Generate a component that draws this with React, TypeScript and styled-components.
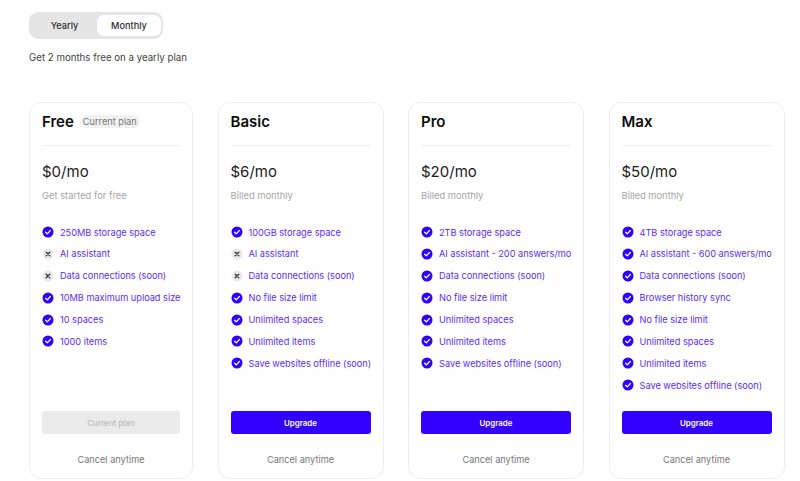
import * as React from "react";
import styled, { createGlobalStyle } from "styled-components";

interface Feature {
    label: string;
    off?: boolean;
}

interface Plan {
    name: string;
    price: string;
    note: string;
    width: number;
    current?: boolean;
    features: Feature[];
}

const plans: Plan[] = [
    {
        name: "Free",
        price: "$0/mo",
        note: "Get started for free",
        width: 164,
        current: true,
        features: [
            { label: "250MB storage space" },
            { label: "AI assistant", off: true },
            { label: "Data connections (soon)", off: true },
            { label: "10MB maximum upload size" },
            { label: "10 spaces" },
            { label: "1000 items" },
        ],
    },
    {
        name: "Basic",
        price: "$6/mo",
        note: "Billed monthly",
        width: 166,
        features: [
            { label: "100GB storage space" },
            { label: "AI assistant", off: true },
            { label: "Data connections (soon)", off: true },
            { label: "No file size limit" },
            { label: "Unlimited spaces" },
            { label: "Unlimited items" },
            { label: "Save websites offline (soon)" },
        ],
    },
    {
        name: "Pro",
        price: "$20/mo",
        note: "Billed monthly",
        width: 176,
        features: [
            { label: "2TB storage space" },
            { label: "AI assistant - 200 answers/mo" },
            { label: "Data connections (soon)" },
            { label: "No file size limit" },
            { label: "Unlimited spaces" },
            { label: "Unlimited items" },
            { label: "Save websites offline (soon)" },
        ],
    },
    {
        name: "Max",
        price: "$50/mo",
        note: "Billed monthly",
        width: 176,
        features: [
            { label: "4TB storage space" },
            { label: "AI assistant - 600 answers/mo" },
            { label: "Data connections (soon)" },
            { label: "Browser history sync" },
            { label: "No file size limit" },
            { label: "Unlimited spaces" },
            { label: "Unlimited items" },
            { label: "Save websites offline (soon)" },
        ],
    },
];

const CheckIcon = () => (
    <Icon viewBox="0 0 12 12">
        <circle cx="6" cy="6" r="5.5" fill="#2f00ff" />
        <path d="M3.6 6.2 5.3 7.8 8.4 4.5" fill="none" stroke="#fff" strokeWidth="1.2" strokeLinecap="round" strokeLinejoin="round" />
    </Icon>
);

const CrossIcon = () => (
    <Icon viewBox="0 0 12 12">
        <circle cx="6" cy="6" r="5.5" fill="#e9e9e9" />
        <path d="M4.2 4.2 7.8 7.8M7.8 4.2 4.2 7.8" fill="none" stroke="#3a3a3a" strokeWidth="1.4" strokeLinecap="round" />
    </Icon>
);

const App: React.FC = () => {
    return (
        <>
            <GlobalStyle />
            <Page>
                <Toggle>
                    <ToggleOption>Yearly</ToggleOption>
                    <ToggleOption $active>Monthly</ToggleOption>
                </Toggle>
                <Promo>Get 2 months free on a yearly plan</Promo>
                <Cards>
                    {plans.map((plan) => (
                        <Card key={plan.name} $width={plan.width}>
                            <Header>
                                <Name>{plan.name}</Name>
                                {plan.current && <Badge>Current plan</Badge>}
                            </Header>
                            <Price>{plan.price}</Price>
                            <Note>{plan.note}</Note>
                            <Features>
                                {plan.features.map((f) => (
                                    <FeatureRow key={f.label}>
                                        {f.off ? <CrossIcon /> : <CheckIcon />}
                                        {f.label}
                                    </FeatureRow>
                                ))}
                            </Features>
                            <Action disabled={plan.current}>
                                {plan.current ? "Current plan" : "Upgrade"}
                            </Action>
                            <Cancel>Cancel anytime</Cancel>
                        </Card>
                    ))}
                </Cards>
            </Page>
        </>
    );
};

const GlobalStyle = createGlobalStyle`
    html, body {
        margin: 0;
        background: #fff;
        font-family: Inter, "Liberation Sans", sans-serif;
    }
`;

const Page = styled.div`
    height: 481px;
    box-sizing: border-box;
    padding: 12px 15px 0 29px;
    overflow: hidden;
`;

const Toggle = styled.div`
    display: inline-grid;
    grid-template-columns: 65px 64px;
    width: 134px;
    height: 27px;
    box-sizing: border-box;
    padding: 3px 2px 3px 3px;
    background: #e5e5e5;
    border-radius: 9px;
    vertical-align: top;
`;

const ToggleOption = styled.div<{ $active?: boolean }>`
    display: flex;
    align-items: center;
    justify-content: center;
    border-radius: 7px;
    font-size: 9.2px;
    font-weight: 500;
    color: #2e2e2e;
    background: ${(p) => (p.$active ? "#fff" : "transparent")};
`;

const Promo = styled.p`
    margin: 11px 0 0;
    font-size: 9.7px;
    line-height: 16px;
    color: #444;
`;

const Cards = styled.div`
    display: flex;
    gap: 24.5px;
    margin-top: 36px;
`;

const Card = styled.section<{ $width: number }>`
    display: flex;
    flex-direction: column;
    width: ${(p) => p.$width}px;
    height: 377px;
    box-sizing: border-box;
    padding: 0 12px;
    border: 1px solid #efefef;
    border-radius: 12px;
`;

const Header = styled.div`
    display: flex;
    align-items: center;
    gap: 6px;
    height: 43px;
    box-sizing: border-box;
    padding-bottom: 6px;
    border-bottom: 1px solid #f0f0f0;
`;

const Name = styled.h2`
    margin: 0;
    font-size: 15px;
    font-weight: 600;
    color: #0d0d0d;
`;

const Badge = styled.span`
    padding: 0 3px;
    border-radius: 7px;
    background: #f1f1f1;
    font-size: 9.2px;
    line-height: 13px;
    color: #777;
`;

const Price = styled.div`
    margin-top: 16px;
    font-size: 15px;
    line-height: 20px;
    color: #1c1c1c;
`;

const Note = styled.div`
    margin-top: 7px;
    font-size: 9.4px;
    line-height: 14px;
    color: #a5a5a5;
`;

const Features = styled.ul`
    display: flex;
    flex-direction: column;
    gap: 5.9px;
    margin: 21px 0 0;
    padding: 0;
    list-style: none;
`;

const FeatureRow = styled.li`
    display: flex;
    align-items: center;
    gap: 6px;
    height: 16px;
    font-size: 9.18px;
    white-space: nowrap;
    color: #5a2cff;
`;

const Icon = styled.svg`
    flex: none;
    width: 12px;
    height: 12px;
`;

const Action = styled.button`
    flex: none;
    height: 23px;
    margin-top: auto;
    padding: 0;
    border: 0;
    border-radius: 3px;
    background: ${(p) => (p.disabled ? "#ebebeb" : "#3300ff")};
    color: ${(p) => (p.disabled ? "#c0c0c0" : "#fff")};
    font-family: inherit;
    font-size: 7.9px;
    font-weight: 600;
`;

const Cancel = styled.div`
    margin: 19px 0 11px;
    text-align: center;
    font-size: 9.2px;
    line-height: 14px;
    color: #777;
`;

export default App;
